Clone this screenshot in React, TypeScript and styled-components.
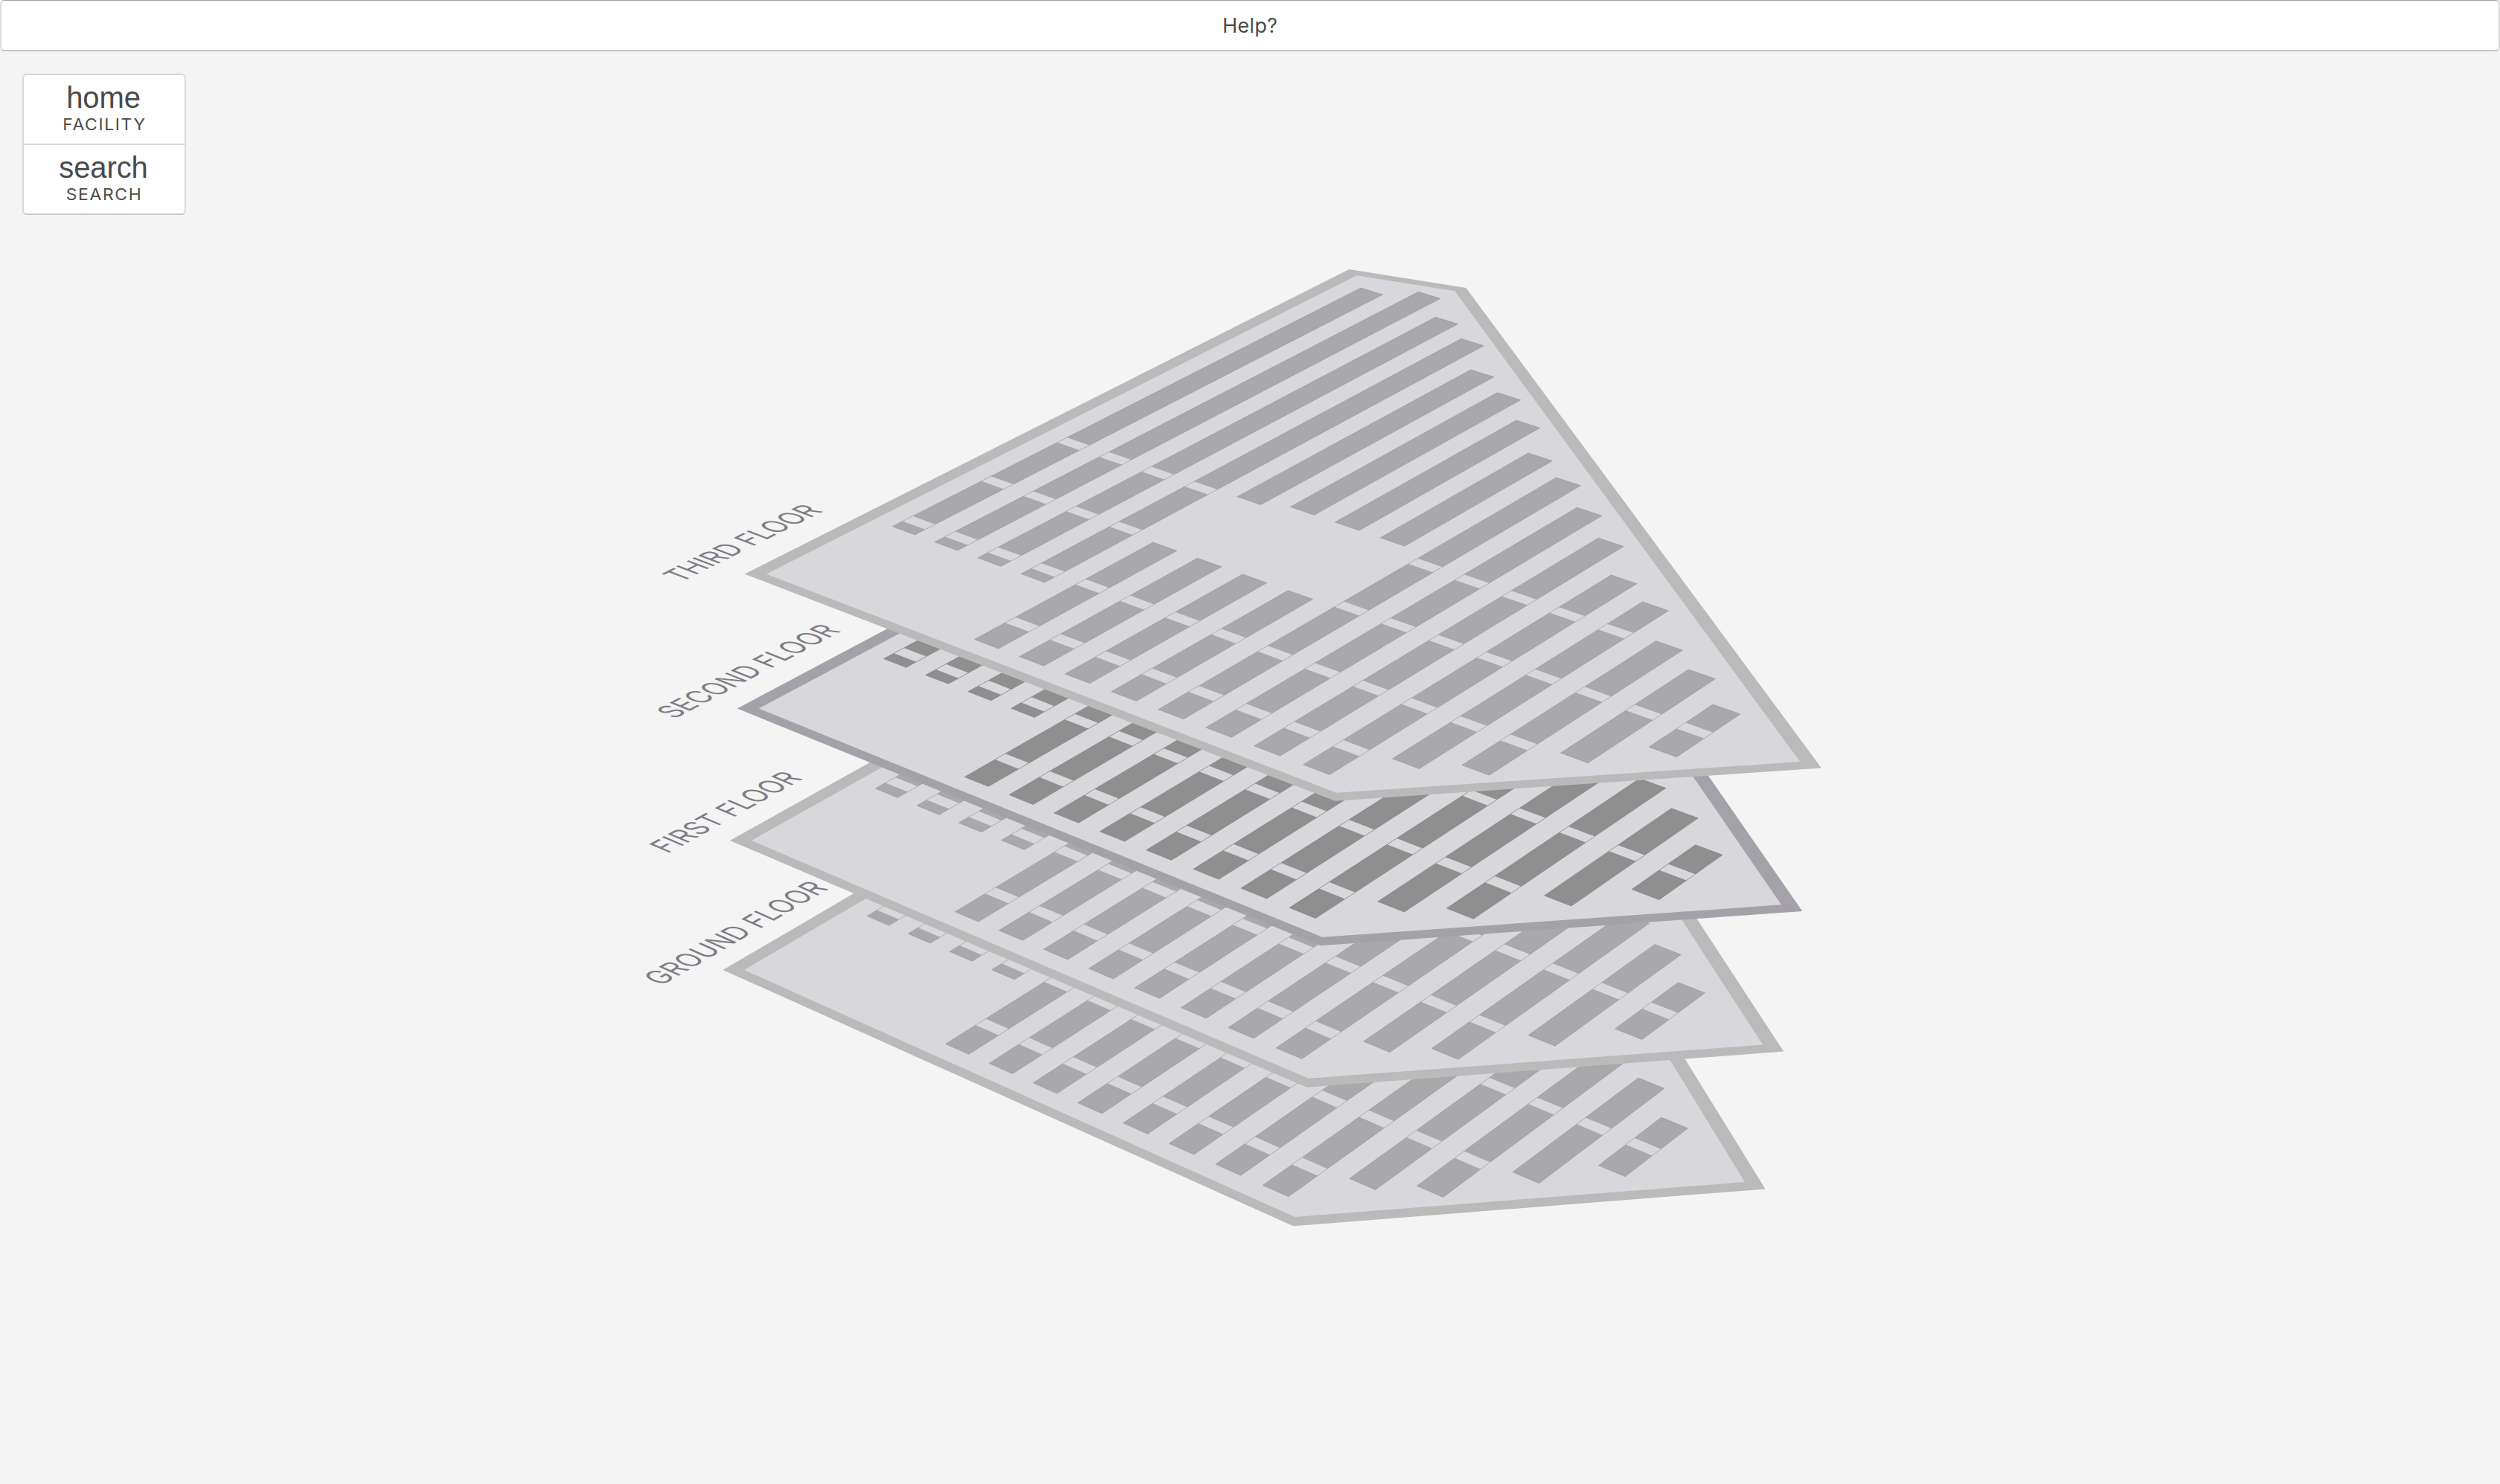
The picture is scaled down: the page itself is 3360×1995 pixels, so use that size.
import React from "react";
import styled, { createGlobalStyle } from "styled-components";

const GlobalStyle = createGlobalStyle`
  html, body, #root {
    margin: 0;
    padding: 0;
    height: 100%;
    background: #f4f4f4;
  }
`;

const Page = styled.div`
  position: relative;
  display: flex;
  flex-direction: column;
  align-items: flex-start;
  width: 100%;
  height: 1995px;
  overflow: hidden;
  background: #f4f4f4;
  color: #4a4a4a;
  font-family: Inter, "Liberation Sans", sans-serif;
`;

const HelpBar = styled.button`
  position: relative;
  box-sizing: border-box;
  display: flex;
  align-items: center;
  justify-content: center;
  width: 100%;
  height: 69px;
  padding: 1px 0 0;
  border: 2px solid #d9d9d9;
  border-top: 1px solid #a0a0a0;
  border-bottom-color: #c7c7c7;
  border-radius: 6px;
  background: #fff;
  color: #4a4a4a;
  font: 400 27px/34px Inter, sans-serif;
  letter-spacing: 0.3px;
`;

const Menu = styled.nav`
  position: relative;
  box-sizing: border-box;
  display: flex;
  flex-direction: column;
  width: 220px;
  margin: 30px 0 0 30px;
  border: 2px solid #d9d9d9;
  border-bottom-color: #c7c7c7;
  border-radius: 6px;
  background: #fff;
`;

const MenuItem = styled.a`
  display: flex;
  flex-direction: column;
  align-items: center;
  gap: 4px;
  padding: 10px 0 12px;

  & + & {
    border-top: 2px solid #d9d9d9;
  }
`;

const MenuGlyph = styled.span`
  padding-right: 2px;
  font: 400 40px/40px "Liberation Sans", Arial, sans-serif;
  letter-spacing: -0.1px;
`;

const MenuLabel = styled.span`
  font: 400 21px/26px Inter, sans-serif;
  letter-spacing: 1.5px;
  text-transform: uppercase;
  transform: scaleX(1.09);
`;

const FloorMap = styled.svg`
  position: absolute;
  top: 0;
  left: 0;
  width: 3360px;
  height: 1995px;
`;

const Border = styled.polygon<{ $active: boolean }>`
  fill: ${(p) => (p.$active ? "#a4a2a8" : "#bababa")};
`;

const Ground = styled.polygon`
  fill: #d8d7dc;
`;

const Stall = styled.polygon<{ $active: boolean }>`
  fill: ${(p) => (p.$active ? "#8f8f8f" : "#a9a9ab")};
`;

const StallEdge = styled.polygon<{ $active: boolean }>`
  fill: none;
  stroke: ${(p) => (p.$active ? "#85858a" : "#8e8e93")};
  stroke-opacity: ${(p) => (p.$active ? 0.75 : 0.5)};
  stroke-width: 1;
`;

const FloorLabel = styled.text`
  fill: #7f7e86;
  font-family: Inter, "Liberation Sans", sans-serif;
  font-size: 100px;
  font-weight: 400;
`;

type Point = [number, number];

/* Vanishing points of the plan's two axes, and of the vertical axis. */
const HORIZON = -2453;
const ALONG_X = 7405;
const ACROSS_X = -7385;
const ORIGIN: Point = [1199.3, 707.7];
const VERTICAL: Point = [-31, 19652];

/* Moves a point of the top floor's picture down by a number of levels. */
const drop = ([x, y]: Point, level: number): Point => {
  const s = (level / 3) * (0.022066 + 8.995e-6 * y);
  return [(x + s * VERTICAL[0]) / (1 + s), (y + s * VERTICAL[1]) / (1 + s)];
};

/* Projects plan coordinates: t runs along the rows, r across them. */
const project = (t: number, r: number, level: number): Point => {
  const w = 1 + t - r;
  return drop(
    [
      (ORIGIN[0] + t * ALONG_X - r * ACROSS_X) / w,
      (ORIGIN[1] + t * HORIZON - r * HORIZON) / w,
    ],
    level
  );
};

const toPoints = (pts: Point[]) =>
  pts.map(([x, y]) => `${x.toFixed(2)},${y.toFixed(2)}`).join(" ");

const OUTER: Point[] = [
  [1000.7, 771.7],
  [1813.3, 362],
  [1970.4, 387],
  [2448, 1032.4],
  [1794.3, 1076.7],
];

const INNER: Point[] = [
  [1030, 771.7],
  [1823.3, 370.3],
  [1955.2, 391.3],
  [2419.3, 1024.1],
  [1796.4, 1065.7],
];

const PITCH = 0.00659;
const DEPTH = 0.00353;

const AISLES: [number, number][] = [
  [-0.013, -0.0108],
  [0.00224, 0.00442],
  [0.01968, 0.0218],
  [0.03706, 0.03928],
];

interface Row {
  row: number;
  from: number;
  to: number;
  aisles: number[];
}

const ROWS: Row[] = [
  { row: 0, from: 0, to: 0.11292, aisles: [1, 2, 3] },
  { row: 1, from: 0, to: 0.11744, aisles: [1, 2, 3] },
  { row: 2, from: 0, to: 0.11091, aisles: [1, 2, 3] },
  { row: 3, from: 0, to: 0.10656, aisles: [1, 2, 3] },
  { row: 4, from: 0.03918, to: 0.09778, aisles: [] },
  { row: 5, from: 0.04135, to: 0.09334, aisles: [] },
  { row: 6, from: 0.04135, to: 0.08682, aisles: [] },
  { row: 7, from: 0.04135, to: 0.07836, aisles: [] },
  { row: 4, from: -0.0195, to: 0.01964, aisles: [0, 1] },
  { row: 5, from: -0.0195, to: 0.01964, aisles: [0, 1] },
  { row: 6, from: -0.0195, to: 0.01964, aisles: [0, 1] },
  { row: 7, from: -0.0195, to: 0.01964, aisles: [0, 1] },
  { row: 8, from: -0.0195, to: 0.07392, aisles: [0, 1, 2, 3] },
  { row: 9, from: -0.0195, to: 0.06744, aisles: [0, 1, 2, 3] },
  { row: 10, from: -0.0195, to: 0.06099, aisles: [0, 1, 2, 3] },
  { row: 11, from: -0.0195, to: 0.05225, aisles: [0, 1, 2, 3] },
  { row: 12, from: -0.01082, to: 0.04803, aisles: [1, 2, 3] },
  { row: 13, from: -0.0065, to: 0.03921, aisles: [1, 2] },
  { row: 14, from: 0.00438, to: 0.03491, aisles: [2] },
  { row: 15, from: 0.01307, to: 0.02847, aisles: [2] },
];

const quad = (row: number, from: number, to: number, level: number) => {
  const r = row * PITCH;
  return toPoints([
    project(from, r, level),
    project(to, r, level),
    project(to, r + DEPTH, level),
    project(from, r + DEPTH, level),
  ]);
};

/* Lays the label flat on the plan, beside the floor's long edge. */
const LABEL_START = -0.0322;
const LABEL_BASE = -0.00903;
const LABEL_SPAN = 0.029;
const EM_ALONG = 0.0045;
const EM_ACROSS = 0.00452;

const labelMatrix = (level: number) => {
  const from = LABEL_START - level * 0.00046;
  const base = LABEL_BASE + level * 0.00036;
  const start = project(from, base, level);
  const end = project(from + LABEL_SPAN, base, level);
  const mid = project(from + LABEL_SPAN / 2, base, level);
  const top = project(from + LABEL_SPAN / 2, base - EM_ACROSS, level);
  const k = EM_ALONG / LABEL_SPAN / 100;
  return `matrix(${[
    (end[0] - start[0]) * k,
    (end[1] - start[1]) * k,
    (mid[0] - top[0]) / 100,
    (mid[1] - top[1]) / 100,
    start[0],
    start[1],
  ].join(" ")})`;
};

interface FloorProps {
  name: string;
  level: number;
  active?: boolean;
}

const Floor = ({ name, level, active = false }: FloorProps) => (
  <g>
    <Border $active={active} points={toPoints(OUTER.map((p) => drop(p, level)))} />
    <Ground points={toPoints(INNER.map((p) => drop(p, level)))} />
    {ROWS.map(({ row, from, to, aisles }) => (
      <g key={`${row}:${from}`}>
        <Stall $active={active} points={quad(row, from, to, level)} />
        {aisles.map((a) => (
          <Ground key={a} points={quad(row, AISLES[a][0], AISLES[a][1], level)} />
        ))}
        <StallEdge $active={active} points={quad(row, from, to, level)} />
      </g>
    ))}
    <FloorLabel transform={labelMatrix(level)}>{name}</FloorLabel>
  </g>
);

const FLOORS: FloorProps[] = [
  { name: "GROUND FLOOR", level: 3 },
  { name: "FIRST FLOOR", level: 2 },
  { name: "SECOND FLOOR", level: 1, active: true },
  { name: "THIRD FLOOR", level: 0 },
];

const MENU = [
  { glyph: "home", label: "Facility" },
  { glyph: "search", label: "Search" },
];

export default function App() {
  return (
    <>
      <GlobalStyle />
      <Page>
        <FloorMap viewBox="0 0 3360 1995">
          {FLOORS.map((f) => (
            <Floor key={f.name} {...f} />
          ))}
        </FloorMap>
        <HelpBar>Help?</HelpBar>
        <Menu>
          {MENU.map((m) => (
            <MenuItem key={m.label}>
              <MenuGlyph>{m.glyph}</MenuGlyph>
              <MenuLabel>{m.label}</MenuLabel>
            </MenuItem>
          ))}
        </Menu>
      </Page>
    </>
  );
}
